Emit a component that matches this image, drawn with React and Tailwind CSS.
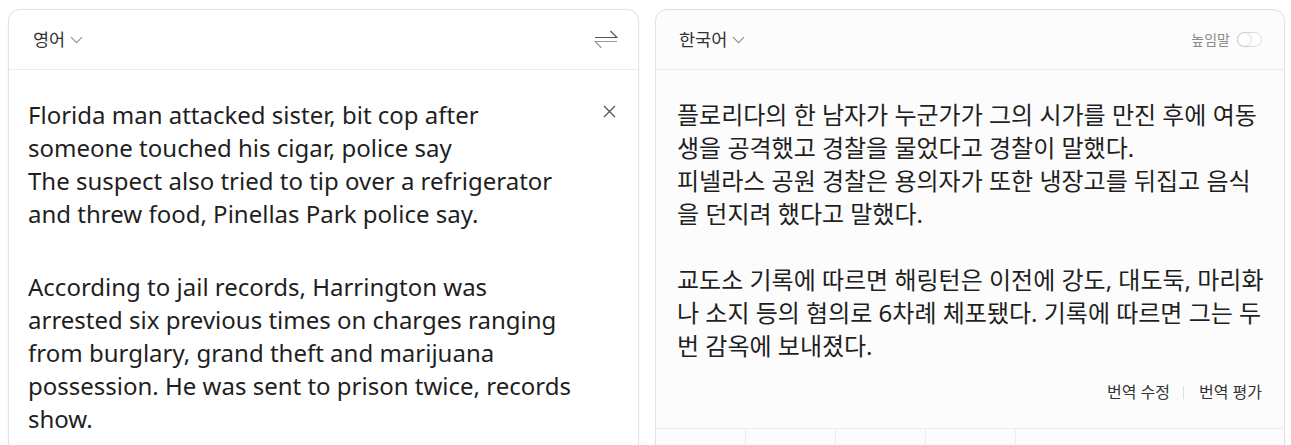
import React from 'react';

const Chevron = () => (
  <svg className="ml-[5px] h-[8px] w-[13px] text-[#8f8f8f]" viewBox="0 0 13 8" fill="none" stroke="currentColor" strokeWidth="1.1">
    <path d="M1 1.2l5.5 5.5 5.5-5.5" />
  </svg>
);

const SwapIcon = () => (
  <svg className="h-[20px] w-[24px]" viewBox="0 0 24 20" fill="none" strokeWidth="1.2">
    <path d="M1 7.5h22L16.5 1" stroke="#555" />
    <path d="M23 11.5H1L7.5 18" stroke="#999" />
  </svg>
);

const CloseIcon = () => (
  <svg className="h-[13px] w-[13px]" viewBox="0 0 13 13" fill="none" stroke="#555" strokeWidth="1.3">
    <path d="M1 1l11 11M12 1L1 12" />
  </svg>
);

const sourceLines = [
  ['Florida man attacked sister, bit cop after', 'someone touched his cigar, police say', 'The suspect also tried to tip over a refrigerator', 'and threw food, Pinellas Park police say.'],
  ['According to jail records, Harrington was', 'arrested six previous times on charges ranging', 'from burglary, grand theft and marijuana', 'possession. He was sent to prison twice, records', 'show.'],
];

const targetLines = [
  ['플로리다의 한 남자가 누군가가 그의 시가를 만진 후에 여동', '생을 공격했고 경찰을 물었다고 경찰이 말했다.', '피넬라스 공원 경찰은 용의자가 또한 냉장고를 뒤집고 음식', '을 던지려 했다고 말했다.'],
  ['교도소 기록에 따르면 해링턴은 이전에 강도, 대도둑, 마리화', '나 소지 등의 혐의로 6차례 체포됐다. 기록에 따르면 그는 두', '번 감옥에 보내졌다.'],
];

export default function App() {
  return (
    <div
      className="flex h-[445px] gap-[16px] overflow-hidden bg-white pl-[8px] pr-[6px] pt-[9px] text-[#222]"
      style={{ fontFamily: '"Noto Sans", "Noto Sans CJK KR", sans-serif' }}
    >
      {/* source panel */}
      <div className="flex h-[520px] w-[631px] flex-col rounded-t-[12px] border border-[#e2e2e2] bg-white shadow-[0_0_3px_rgba(0,0,0,0.04)]">
        <div className="flex h-[60px] items-center justify-between border-b border-[#ececec] pl-[24px] pr-[20px]">
          <div className="flex items-center text-[17.5px] text-[#333]">
            영어
            <Chevron />
          </div>
          <SwapIcon />
        </div>
        <div className="flex justify-between pl-[19px] pr-[22px] pt-[28px]">
          <div className="text-[24px] leading-[33px] text-[#1f1f1f]">
            {sourceLines.map((para, i) => (
              <div key={i} className={i > 0 ? 'mt-[40px]' : ''}>
                {para.map((line) => (
                  <div key={line} className="whitespace-nowrap">{line}</div>
                ))}
              </div>
            ))}
          </div>
          <div className="pt-[7px]">
            <CloseIcon />
          </div>
        </div>
      </div>

      {/* target panel */}
      <div className="flex h-[520px] w-[630px] flex-col rounded-t-[12px] border border-[#e2e2e2] bg-[#fcfcfc] shadow-[0_0_3px_rgba(0,0,0,0.04)]">
        <div className="flex h-[60px] items-center justify-between border-b border-[#ececec] pl-[23px] pr-[22px]">
          <div className="flex items-center text-[17.5px] text-[#333]">
            한국어
            <Chevron />
          </div>
          <div className="flex items-center gap-[7px] text-[14px] text-[#8a8a8a]">
            높임말
            <div className="flex h-[15px] w-[25px] items-center rounded-full border border-[#dcdcdc] bg-white">
              <div className="h-[13px] w-[13px] rounded-full bg-white shadow-[0_0_2px_rgba(0,0,0,0.35)]" />
            </div>
          </div>
        </div>
        <div className="pl-[21px] pt-[28px] text-[24px] leading-[33px] text-[#1f1f1f]">
          {targetLines.map((para, i) => (
            <div key={i} className={i > 0 ? 'mt-[33px]' : ''}>
              {para.map((line) => (
                <div key={line} className="whitespace-nowrap">{line}</div>
              ))}
            </div>
          ))}
        </div>
        <div className="mt-[18px] flex items-center justify-end pr-[22px] text-[16px] text-[#333]">
          <span>번역 수정</span>
          <span className="ml-[13px] mr-[15px] h-[13px] w-px bg-[#e0e0e0]" />
          <span>번역 평가</span>
        </div>
        <div className="mt-[24px] flex h-[60px] border-t border-[#ececec]">
          {[0, 1, 2, 3].map((n) => (
            <div key={n} className="w-[90px] border-r border-[#ececec]" />
          ))}
          <div className="flex-1" />
        </div>
      </div>
    </div>
  );
}
